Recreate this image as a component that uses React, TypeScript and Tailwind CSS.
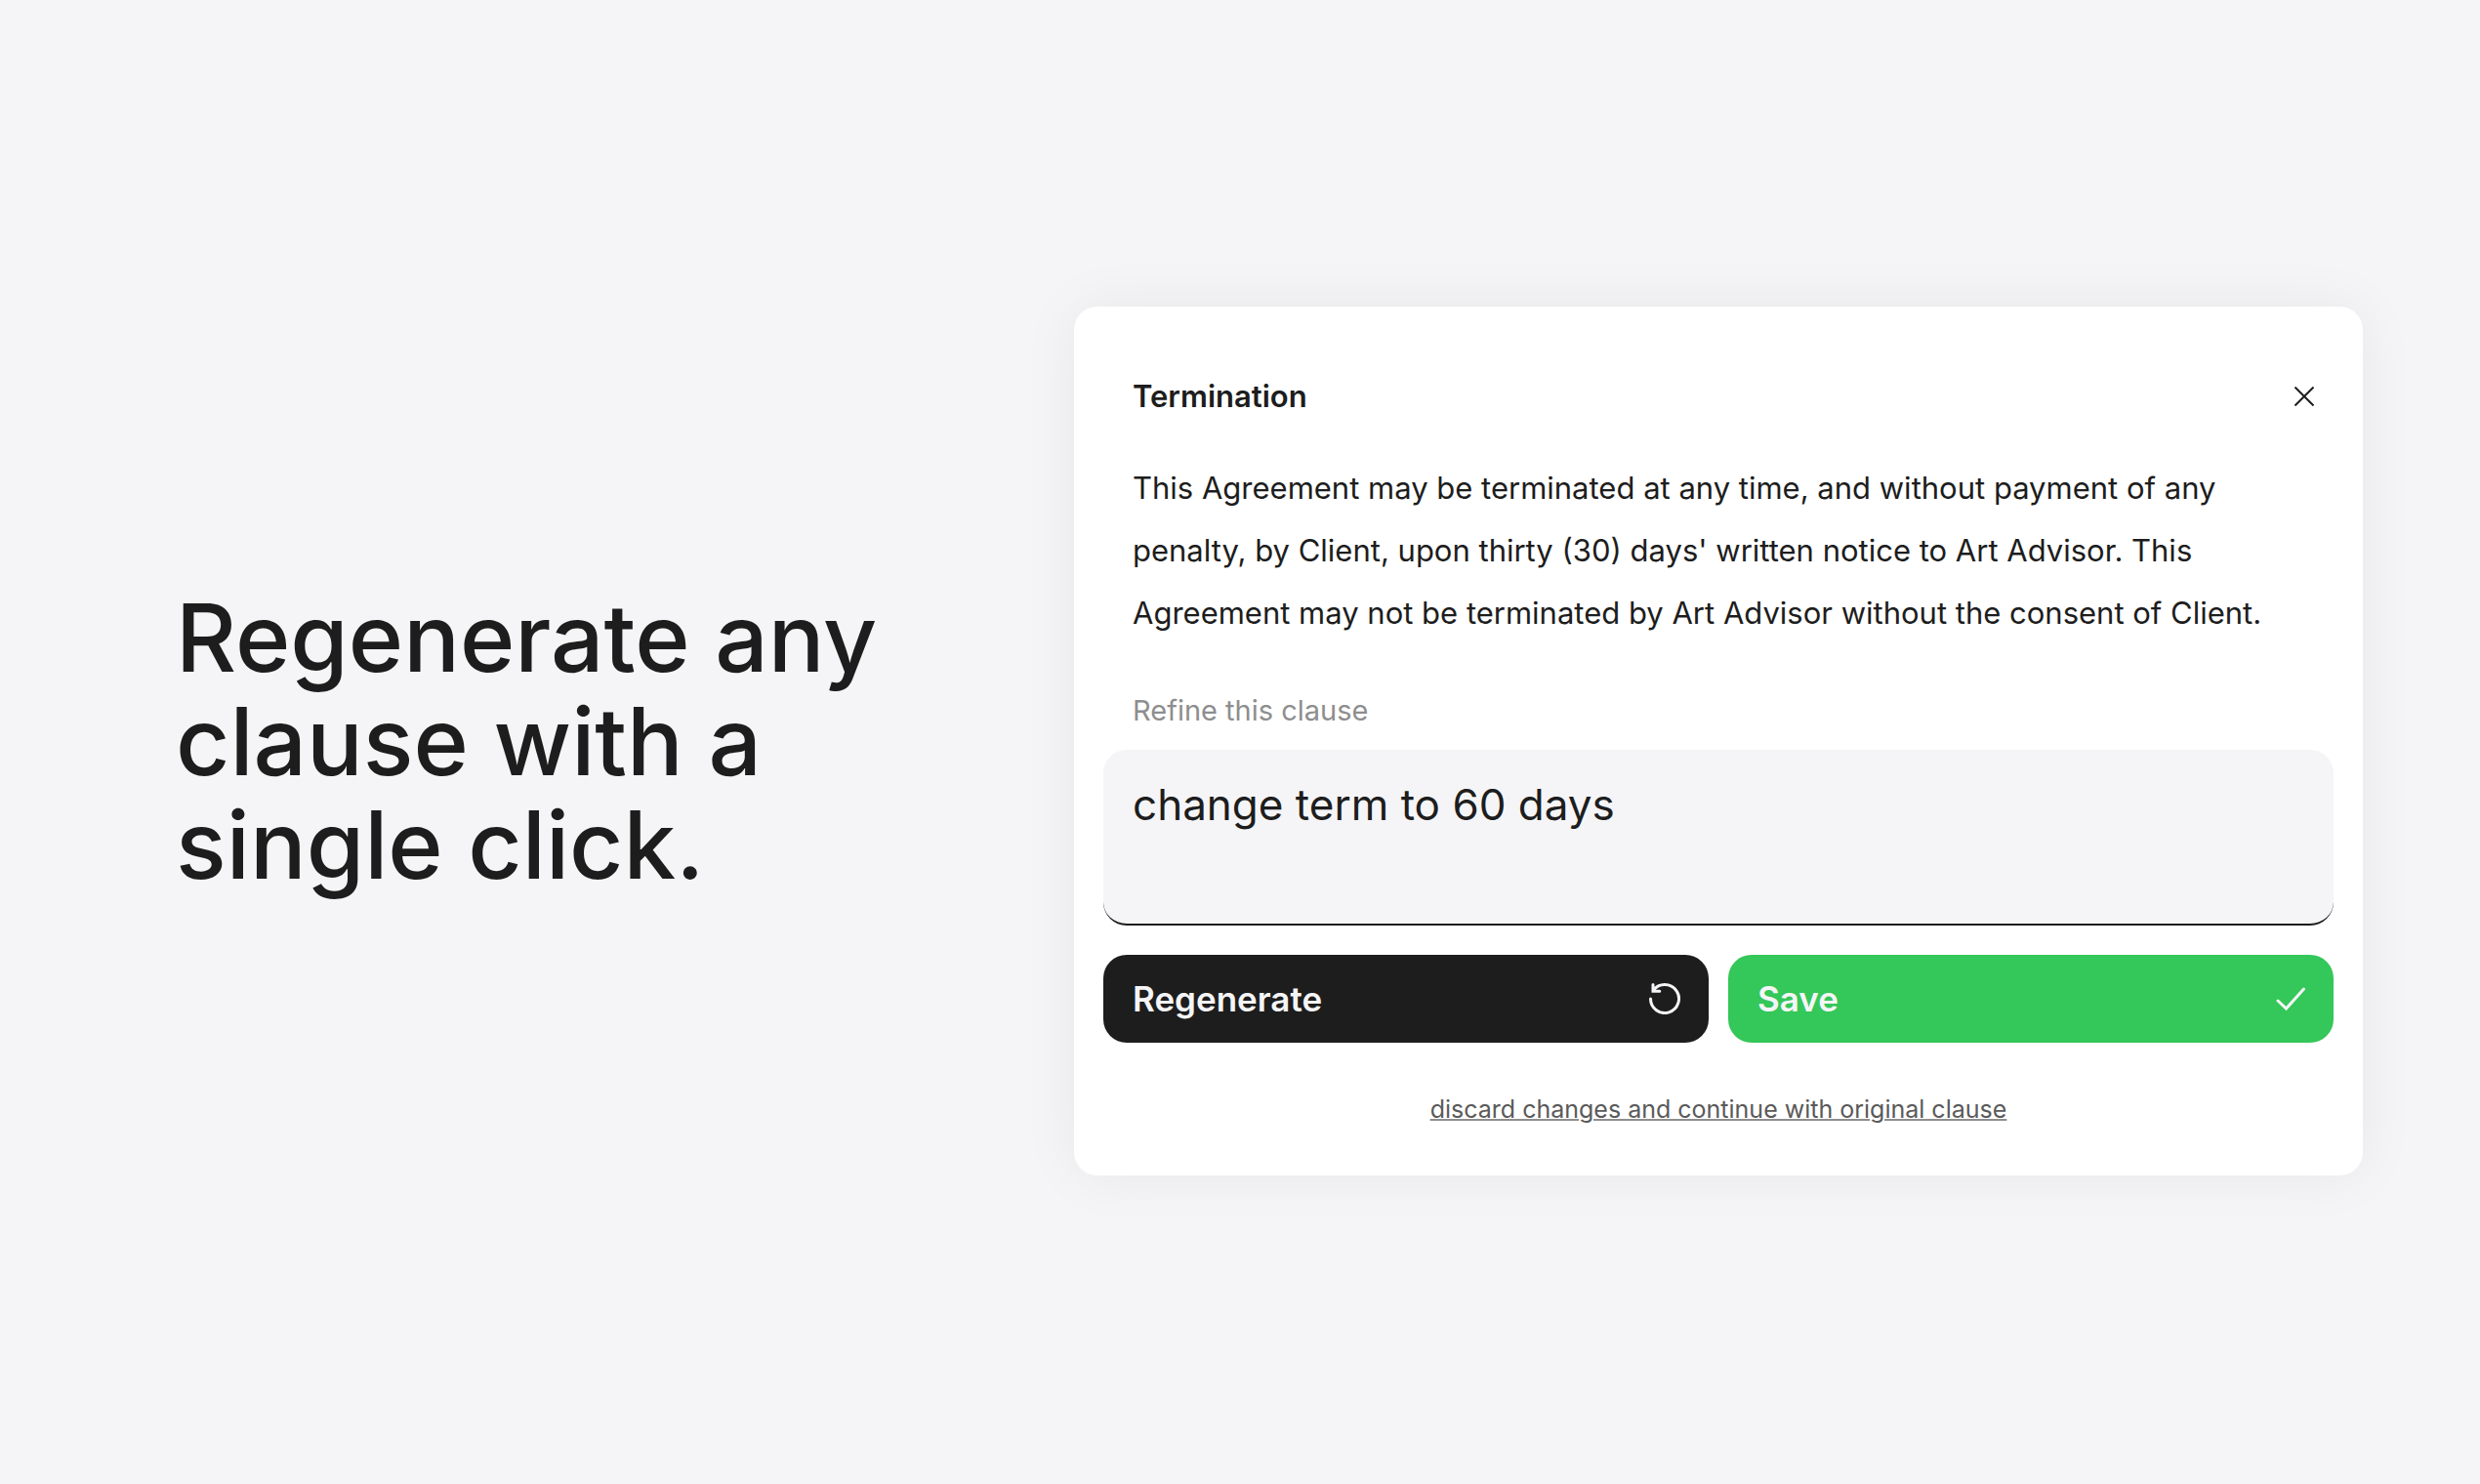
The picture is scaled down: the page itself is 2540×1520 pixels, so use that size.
import React, { useState } from 'react';

function CloseIcon() {
  return (
    <svg width="20" height="20" viewBox="0 0 20 20" fill="none" stroke="currentColor" strokeWidth="2" aria-hidden="true">
      <path d="M0.5 0.5L19.5 19.5M19.5 0.5L0.5 19.5" />
    </svg>
  );
}

function RegenerateIcon() {
  return (
    <svg width="32" height="32" viewBox="0 0 32 32" fill="none" stroke="currentColor" strokeWidth="3" strokeLinecap="round" aria-hidden="true">
      <path d="M1.5 16A14.5 14.5 0 1 0 4.4 7.3" />
      <path d="M4 1.5V8.2H10.8" />
    </svg>
  );
}

function CheckIcon() {
  return (
    <svg width="32" height="32" viewBox="0 0 32 32" fill="none" stroke="currentColor" strokeWidth="3" strokeLinecap="round" aria-hidden="true">
      <path d="M4 18L12.5 26L30.5 6" />
    </svg>
  );
}

export default function App() {
  const [prompt, setPrompt] = useState('change term to 60 days');

  return (
    <main className="min-h-screen flex items-center gap-30 bg-[#f5f5f7] text-[#1d1d1d] pl-45 pr-30 pb-0.5 font-['Inter',sans-serif]">
      <h1 className="w-[800px] text-[96px] leading-[106px] font-medium">
        Regenerate any
        <br />
        clause with a
        <br />
        single click.
      </h1>

      <section className="flex-1 bg-white rounded-3xl px-[30px] pt-[60px] pb-12 shadow-[0_0_60px_rgba(0,0,0,0.06)]">
        <div className="flex items-center justify-between h-16 pl-[30px] pr-[10px]">
          <h2 className="text-[31px] font-semibold">Termination</h2>
          <button type="button" aria-label="Close" className="p-2.5">
            <CloseIcon />
          </button>
        </div>

        <p className="mt-[30px] px-[30px] text-[31px] leading-[64px]">
          This Agreement may be terminated at any time, and without payment of any
          <br />
          penalty, by Client, upon thirty (30) days' written notice to Art Advisor. This
          <br />
          Agreement may not be terminated by Art Advisor without the consent of Client.
        </p>

        <label htmlFor="refine" className="block mt-12 px-[30px] text-[29px] leading-[40px] text-[#8e8e8e]">
          Refine this clause
        </label>
        <textarea
          id="refine"
          value={prompt}
          onChange={(e) => setPrompt(e.target.value)}
          className="block w-full h-[180px] mt-5 px-[30px] py-[30px] resize-none rounded-3xl bg-[#f5f5f7] border-b-2 border-[#1d1d1d] text-[44px] leading-[52px] outline-none"
        />

        <div className="grid grid-cols-2 gap-5 mt-[30px] text-[35px] font-semibold text-[#f5f5f7]">
          <button type="button" className="flex items-center justify-between h-[90px] pl-[30px] pr-[29px] rounded-3xl bg-[#1d1d1d]">
            Regenerate
            <RegenerateIcon />
          </button>
          <button type="button" className="flex items-center justify-between h-[90px] pl-[30px] pr-[29px] rounded-3xl bg-[#34c759]">
            Save
            <CheckIcon />
          </button>
        </div>

        <div className="mt-12 text-center text-[25px] leading-[40px] text-[#5a5a5a]">
          <a href="#original" className="underline decoration-2 decoration-[#8e8e8e]">
            discard changes and continue with original clause
          </a>
        </div>
      </section>
    </main>
  );
}
